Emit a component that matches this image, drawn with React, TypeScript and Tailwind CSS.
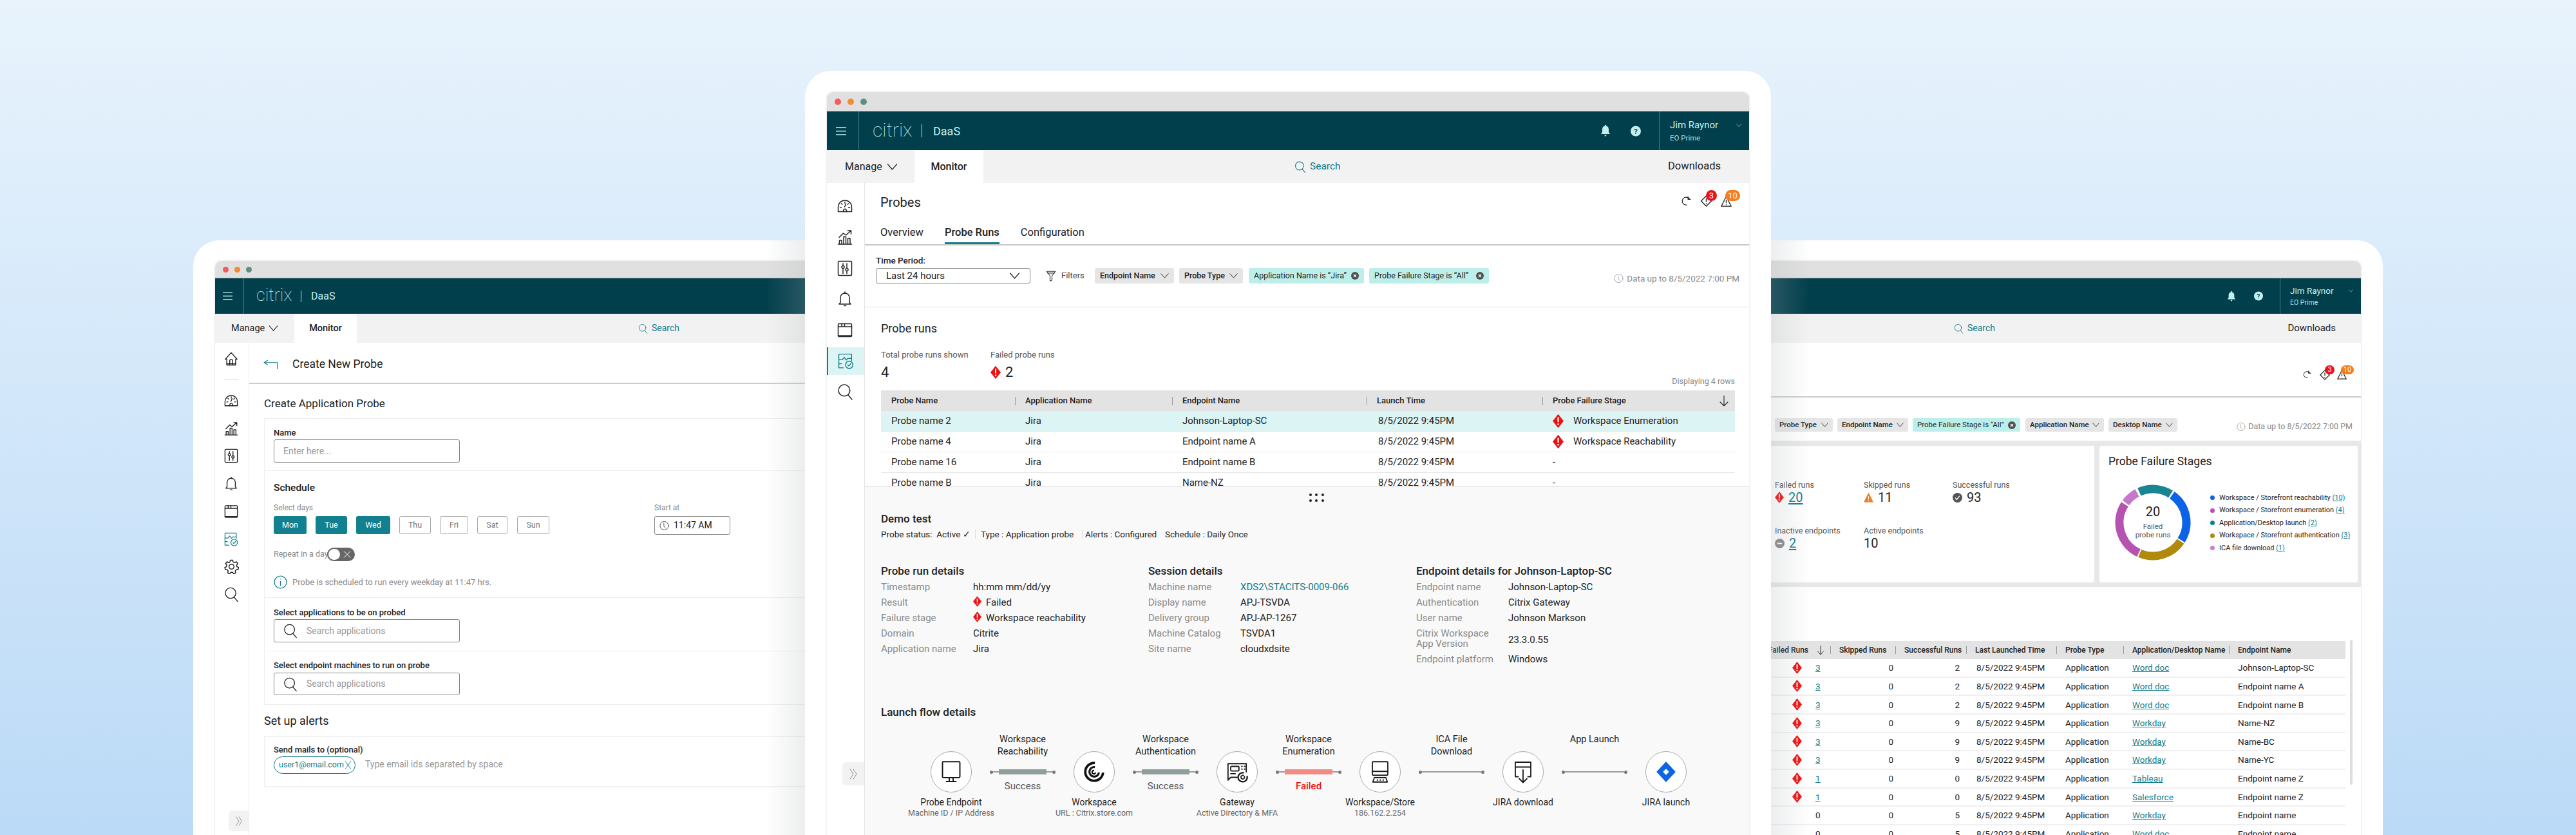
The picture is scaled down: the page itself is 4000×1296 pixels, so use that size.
import React from "react";

type P = { className?: string };
const Svg = ({ className, children, vb = "0 0 24 24", sw = 1.5 }: P & { children: React.ReactNode; vb?: string; sw?: number }) => (
  <svg viewBox={vb} fill="none" stroke="currentColor" strokeWidth={sw} strokeLinecap="round" strokeLinejoin="round" className={className}>
    {children}
  </svg>
);

const Gauge = ({ className }: P) => (
  <Svg className={className}>
    <path d="M1.500 20.500v-7a10.500 10.500 0 0 1 21 0v7z" />
    <path d="M9 20.500l1.500-4h3l1.500 4" />
    <path d="M12 5.500v2M6.500 8l1.200 1.200M17.500 8l-1.200 1.200M4.500 14h2M17.500 14h2M11.500 13l2-4.500" />
  </Svg>
);
const Graph = ({ className }: P) => (
  <Svg className={className}>
    <path d="M1.500 23h21M3.500 23v-6h3.500v6M10 23V11.500h3.500V23M16.500 23v-9H20v9" />
    <path d="M3 12.500 9.500 6l4 3L21.500 2M16.500 2h5v5" />
  </Svg>
);
const Sliders = ({ className }: P) => (
  <Svg className={className}>
    <rect x="1.500" y="1" width="21" height="22" rx="1.500" />
    <path d="M9 4.500v3.500M9 12v8M15 4.500v7M15 16v4" />
    <circle cx="9" cy="10" r="2" />
    <circle cx="15" cy="14" r="2" />
  </Svg>
);
const Bell = ({ className }: P) => (
  <Svg className={className}>
    <path d="M12 1v2.500M5 17.500V10a7 7 0 0 1 14 0v7.500l2 2.500H3z" />
    <path d="M10.500 22.500h3" />
  </Svg>
);
const Win = ({ className }: P) => (
  <Svg className={className}>
    <rect x="1.500" y="2" width="21" height="20" rx="1.500" />
    <path d="M1.500 6.500h21M7 2v4.500M11.500 2v4.500" />
    <path d="M1.500 20.500h21" />
  </Svg>
);
const ProbeIc = ({ className }: P) => (
  <Svg className={className} sw={1.300}>
    <path d="M8 22H1.500V1.500h19V11" />
    <path d="M1.500 10h5l3-3.500 3 4 2-2.500h6" />
    <path d="M1.500 16h4" />
    <circle cx="17" cy="17.500" r="5.500" />
    <path d="m14.800 17.500 1.700 1.800 2.800-3.500" />
  </Svg>
);
const Search = ({ className }: P) => (
  <Svg className={className} vb="0 0 24 24" sw={1.400}>
    <circle cx="10.500" cy="10" r="8.500" />
    <path d="m16 16.500 6 7" />
  </Svg>
);
const Home = ({ className }: P) => (
  <Svg className={className}>
    <path d="M12 1.500 2 12.500h2.500v10h15v-10H22z" />
    <path d="M9.500 22.500v-7a2.500 2.500 0 0 1 5 0v7" />
    <path d="M4.500 20.500h15" />
  </Svg>
);
const Gear = ({ className }: P) => (
  <Svg className={className}>
    <path d="M10 1.500h4l.6 3 2.500 1.100 2.600-1.600 2.500 3-2 2.300.5 2.700 2.800 1.100-.8 3.800-3 0-1.700 2.100.9 2.900-3.500 1.700-1.700-2.500h-2.800l-1.700 2.500-3.500-1.700.9-2.900-1.700-2.100-3 0-.8-3.800 2.800-1.100.5-2.700-2-2.300 2.500-3 2.600 1.600L9.400 4.500z" />
    <circle cx="12" cy="12" r="4" />
  </Svg>
);
const Chev = ({ className }: P) => (
  <Svg className={className} vb="0 0 16 10" sw={1.200}>
    <path d="m1 1 7 8 7-8" />
  </Svg>
);
const DblChev = ({ className }: P) => (
  <Svg className={className} vb="0 0 16 20" sw={1}>
    <path d="m2 1 6 9-6 9M8 1l6 9-6 9" />
  </Svg>
);
const Diamond = ({ className }: P) => (
  <svg viewBox="0 0 16 20" className={className}>
    <path d="M8 .5 15.500 10 8 19.500.5 10z" fill="#ee1111" stroke="#ee1111" strokeLinejoin="round" />
    <path d="M8 4.500v7" stroke="#fff" strokeWidth="2" />
    <circle cx="8" cy="14.500" r="1.200" fill="#fff" />
  </svg>
);
const XCirc = () => (
  <svg viewBox="0 0 12 12" className="w-[12px] h-[12px] shrink-0">
    <circle cx="6" cy="6" r="6" fill="#505050" />
    <path d="m4 4 4 4M8 4 4 8" stroke="#fff" strokeWidth="1.300" />
  </svg>
);
const Clock = ({ className }: P) => (
  <Svg className={className} sw={1.200}>
    <circle cx="12" cy="12" r="10.500" />
    <path d="M11 6v7l4 5" />
  </Svg>
);
const Funnel = ({ className }: P) => (
  <Svg className={className}>
    <path d="M3 3h18l-7 9v9l-4 2V12z" />
    <path d="M5 6.500h14" />
  </Svg>
);
const Refresh = ({ className }: P) => (
  <Svg className={className} sw={1.600}>
    <path d="M16 5.500A8 8 0 1 0 13 20" />
    <path d="M15.500 3v5.500h5" fill="currentColor" />
  </Svg>
);

function StatusIcons({ big }: { big: boolean }) {
  return (
    <div className={big ? "flex items-center mr-[27px] mt-[-4px]" : "flex items-center mr-[22px] mt-[-2px]"}>
      <Refresh className={big ? "w-[19px] h-[18px] text-[#222]" : "w-[17px] h-[15px] text-[#222]"} />
      <div className={big ? "relative ml-[12px]" : "relative ml-[11px]"}>
        <svg viewBox="0 0 18 18" fill="none" stroke="#222" strokeWidth="1.400" className={big ? "w-[19px] h-[18px]" : "w-[16px] h-[16px]"}>
          <path d="M9 1 17 9 9 17 1 9z" />
          <path d="M9 5v5.500M9 12.500V14" />
        </svg>
        <span className={big ? "absolute left-[9px] top-[-8px] w-[17px] h-[17px] rounded-full bg-[#e8131a] text-white text-[13px] leading-[17px] text-center" : "absolute left-[8px] top-[-7px] w-[15px] h-[14px] rounded-full bg-[#e8131a] text-white text-[11px] leading-[14px] text-center"}>3</span>
      </div>
      <div className={big ? "relative ml-[13px]" : "relative ml-[11px]"}>
        <svg viewBox="0 0 18 18" fill="none" stroke="#222" strokeWidth="1.400" className={big ? "w-[17px] h-[17px]" : "w-[15px] h-[15px]"}>
          <path d="M9 1 17 17H1z" />
          <path d="M9 6.500v5.500M9 14v1" />
        </svg>
        <span className={big ? "absolute left-[7px] top-[-9px] w-[23px] h-[17px] rounded-full bg-[#f57c1f] text-white text-[13px] leading-[17px] text-center" : "absolute left-[6px] top-[-7px] w-[20px] h-[14px] rounded-full bg-[#f57c1f] text-white text-[11px] leading-[14px] text-center"}>10</span>
      </div>
    </div>
  );
}

function Chrome({ big, children }: { big: boolean; children: React.ReactNode }) {
  return (
    <div className="flex flex-col h-full border-x-2 border-t-2 border-[#f2f2f2] rounded-t-[12px] overflow-hidden">
      <div className={big ? "h-[30px] bg-[#e0e0e0] border-b border-[#b5b5b5] flex items-center pl-[12px] gap-[10px] shrink-0" : "h-[27px] bg-[#e0e0e0] border-b border-[#b5b5b5] flex items-center pl-[12px] gap-[9px] shrink-0"}>
        <span className={big ? "w-[10px] h-[10px] rounded-full bg-[#f4595d]" : "w-[9px] h-[9px] rounded-full bg-[#f4595d]"} />
        <span className={big ? "w-[10px] h-[10px] rounded-full bg-[#f58a33]" : "w-[9px] h-[9px] rounded-full bg-[#f58a33]"} />
        <span className={big ? "w-[10px] h-[10px] rounded-full bg-[#5b8f86]" : "w-[9px] h-[9px] rounded-full bg-[#5b8f86]"} />
      </div>
      <div className={big ? "h-[60px] bg-[#023f4c] flex items-stretch text-[#c2f0ee] shrink-0" : "h-[55px] bg-[#023f4c] flex items-stretch text-[#c2f0ee] shrink-0"}>
        <div className={big ? "w-[50px] border-r border-[#4a7a85] flex items-center justify-center pr-[6px]" : "w-[45px] border-r border-[#4a7a85] flex items-center justify-center pr-[6px]"}>
          <svg viewBox="0 0 16 14" className={big ? "w-[16px] h-[15px]" : "w-[15px] h-[13px]"} stroke="currentColor" strokeWidth="1.500"><path d="M0 1.500h16M0 7h16M0 12.500h16" /></svg>
        </div>
        <div className={big ? "flex items-center pl-[21px]" : "flex items-center pl-[19px]"}>
          <span className={big ? "text-[30px] font-thin leading-none w-[60px] whitespace-nowrap pb-[3px]" : "text-[27px] font-thin leading-none w-[55px] whitespace-nowrap pb-[3px]"}>citrix</span>
          <span className={big ? "w-px h-[20px] bg-[#c2f0ee] ml-[16px]" : "w-px h-[18px] bg-[#c2f0ee] ml-[14px]"} />
          <span className={big ? "ml-[17px] text-[18px]" : "ml-[15px] text-[16px]"}>DaaS</span>
        </div>
        <div className={big ? "ml-auto flex items-center gap-[31px] pr-[28px]" : "ml-auto flex items-center gap-[28px] pr-[26px]"}>
          <svg viewBox="0 0 16 18" fill="currentColor" className={big ? "w-[16px] h-[18px]" : "w-[14px] h-[16px]"}><path d="M8 0a1.200 1.200 0 0 1 1.200 1.500C12 2.200 13 4.500 13 7v4l2 3H1l2-3V7c0-2.500 1-4.800 3.800-5.500A1.200 1.200 0 0 1 8 0zM6 15.500h4L8 18z" /></svg>
          <svg viewBox="0 0 16 16" className={big ? "w-[16px] h-[17px]" : "w-[14px] h-[15px]"}><circle cx="8" cy="8" r="8" fill="currentColor" /><text x="8" y="12" textAnchor="middle" fontSize="11" fontWeight="700" fill="#023f4c">?</text></svg>
        </div>
        <div className={big ? "w-[140px] border-l border-[#4a7a85] pl-[16px] pt-[12px] relative" : "w-[126px] border-l border-[#4a7a85] pl-[15px] pt-[11px] relative"}>
          <div className={big ? "text-[15px] leading-[18px]" : "text-[13.500px] leading-[16px]"}>Jim Raynor</div>
          <div className={big ? "text-[11.500px] leading-[14px] mt-[4px] opacity-90" : "text-[10.500px] leading-[13px] mt-[4px] opacity-90"}>EO Prime</div>
          <Chev className={big ? "absolute right-[12px] top-[19px] w-[8px] h-[5px]" : "absolute right-[12px] top-[17px] w-[7px] h-[5px]"} />
        </div>
      </div>
      <div className={big ? "h-[51px] bg-[#f2f2f2] flex items-stretch text-[#222] shrink-0" : "h-[45px] bg-[#f2f2f2] flex items-stretch text-[#222] shrink-0"}>
        <div className={big ? "w-[136px] pl-[28px] flex items-center gap-[7px] text-[16px] whitespace-nowrap" : "w-[123px] pl-[25px] flex items-center gap-[6px] text-[14.500px] whitespace-nowrap"}>
          Manage <Chev className={big ? "w-[17px] h-[10px]" : "w-[15px] h-[9px]"} />
        </div>
        <div className={big ? "w-[107px] bg-white flex items-center justify-center text-[16px] font-medium" : "w-[97px] bg-white flex items-center justify-center text-[14.500px] font-medium"}>Monitor</div>
        <div className={big ? "ml-[483px] flex items-center gap-[6px] text-[15.500px] text-[#0f7c8c]" : "ml-[437px] flex items-center gap-[6px] text-[14px] text-[#0f7c8c]"}>
          <Search className={big ? "w-[18px] h-[18px]" : "w-[15px] h-[16px]"} /> Search
        </div>
        <div className={big ? "ml-auto mr-[44px] flex items-center text-[16.500px]" : "ml-auto mr-[39px] flex items-center text-[15px]"}>Downloads</div>
      </div>
      {children}
    </div>
  );
}

function Side({ big, children }: { big: boolean; children: React.ReactNode }) {
  return (
    <div className={big ? "relative w-[59px] shrink-0 border-r border-[#e5e5e5] bg-white flex flex-col items-stretch pt-[12px] text-[#222]" : "relative w-[53px] shrink-0 border-r border-[#eee] bg-white flex flex-col items-stretch pt-[3px] text-[#222]"}>
      {children}
    </div>
  );
}

const BigSlot = ({ children, active }: { children: React.ReactNode; active?: boolean }) => (
  <div className={active ? "h-[43px] mt-[3px] mb-[2px] flex items-center justify-center bg-[#dcf4f4] border-l-2 border-[#0f7c8c] text-[#0f7c8c] pr-[2px]" : "h-[48px] flex items-center justify-center pr-[2px]"}>{children}</div>
);
const SmSlot = ({ children, teal }: { children: React.ReactNode; teal?: boolean }) => (
  <div className={teal ? "h-[43px] flex items-center justify-center text-[#0f7c8c] pr-[2px]" : "h-[43px] flex items-center justify-center pr-[2px]"}>{children}</div>
);

function HCell({ children, first, right }: { children: React.ReactNode; first?: boolean; right?: React.ReactNode }) {
  return (
    <div className="flex items-center pl-[16px] relative font-medium">
      {!first && <span className="absolute left-0 h-[13px] w-px bg-[#9a9a9a]" />}
      {children}
      {right}
    </div>
  );
}

const bigRows = [
  ["Probe name 2", "Jira", "Johnson-Laptop-SC", "8/5/2022 9:45PM", "Workspace Enumeration"],
  ["Probe name 4", "Jira", "Endpoint name A", "8/5/2022 9:45PM", "Workspace Reachability"],
  ["Probe name 16", "Jira", "Endpoint name B", "8/5/2022 9:45PM", "-"],
  ["Probe name B", "Jira", "Name-NZ", "8/5/2022 9:45PM", "-"],
];

function KV({ k, v, vClass, icon, tall, k2 }: { k: string; v: string; vClass?: string; icon?: boolean; tall?: boolean; k2?: string }) {
  return (
    <div className={tall ? "flex h-[40px] leading-[16px] pt-[4px]" : "flex h-[24px] items-center"}>
      <div className="w-[143px] text-[#8a8a8a] shrink-0">
        {k}
        {k2 && <div>{k2}</div>}
      </div>
      <div className={"flex items-center " + (vClass ?? "text-[#222]")}>
        {icon && <Diamond className="w-[13px] h-[17px] mr-[7px] -mt-[3px]" />}
        {v}
      </div>
    </div>
  );
}

function Connector({ t1, t2, res, state }: { t1: string; t2?: string; res?: string; state?: "ok" | "fail" }) {
  return (
    <div className="w-[102px] shrink-0 flex flex-col items-center">
      <div className="h-[41px] pt-[3px] text-center text-[14.500px] leading-[19px] text-[#222] whitespace-nowrap">
        <div>{t1}</div>
        {t2 && <div>{t2}</div>}
      </div>
      <div className="relative w-full h-[16px] mt-[14px] flex items-center">
        <span className="w-[5px] h-[5px] rounded-full bg-[#777] shrink-0" />
        <span className="flex-1 h-[2px] bg-[#9a9a9a]" />
        <span className="w-[5px] h-[5px] rounded-full bg-[#777] shrink-0" />
        {state && <span className={state === "ok" ? "absolute left-[14px] top-[4px] w-[74px] h-[8px] bg-[#8f9d9c]" : "absolute left-[14px] top-[4px] w-[74px] h-[8px] bg-[#f08c84]"} />}
      </div>
      {res && <div className={state === "fail" ? "mt-[5px] h-[18px] leading-[18px] text-[15px] font-medium text-[#ee1111]" : "mt-[5px] h-[18px] leading-[18px] text-[15px] text-[#555]"}>{res}</div>}
    </div>
  );
}

function Node({ title, sub, children }: { title: string; sub?: string; children: React.ReactNode }) {
  return (
    <div className="w-[120px] shrink-0 flex flex-col items-center pt-[31px] whitespace-nowrap">
      <div className="w-[64px] h-[64px] rounded-full border border-[#aaa] bg-white flex items-center justify-center text-[#1a1a1a]">{children}</div>
      <div className="mt-[6px] h-[18px] leading-[18px] text-[14px] text-[#222]">{title}</div>
      {sub && <div className="h-[16px] leading-[16px] text-[12.500px] text-[#666]">{sub}</div>}
    </div>
  );
}

const chipBig = "h-[24px] rounded-[3px] px-[8px] flex items-center justify-between text-[12.500px] whitespace-nowrap shrink-0";

function CenterWindow() {
  return (
    <Chrome big>
      <div className="flex flex-1 min-h-0 text-[#222]">
        <Side big>
          <BigSlot><Gauge className="w-[24px] h-[24px]" /></BigSlot>
          <BigSlot><Graph className="w-[24px] h-[24px]" /></BigSlot>
          <BigSlot><Sliders className="w-[24px] h-[25px]" /></BigSlot>
          <BigSlot><Bell className="w-[24px] h-[26px]" /></BigSlot>
          <BigSlot><Win className="w-[24px] h-[25px]" /></BigSlot>
          <BigSlot active><ProbeIc className="w-[25px] h-[25px]" /></BigSlot>
          <BigSlot><Search className="w-[25px] h-[26px]" /></BigSlot>
          <div className="absolute right-0 top-[899px] w-[34px] h-[36px] bg-[#f2f2f2] rounded-l-[6px] flex items-center justify-center text-[#777]">
            <DblChev className="w-[16px] h-[17px]" />
          </div>
        </Side>
        <div className="flex-1 min-w-0 flex flex-col">
          <div className="border-b-2 border-[#c8c8c8] shrink-0">
            <div className="h-[60px] pl-[24px] flex items-center justify-between">
              <span className="text-[20px]">Probes</span>
              <StatusIcons big />
            </div>
            <div className="h-[35px] pl-[24px] flex gap-[33px] text-[16.500px] whitespace-nowrap">
              <span className="flex items-center h-[35px]">Overview</span>
              <span className="flex items-center h-[35px] font-medium border-b-[3px] border-[#0f7c8c] pt-[3px]">Probe Runs</span>
              <span className="flex items-center h-[35px]">Configuration</span>
            </div>
          </div>
          <div className="h-[96px] shrink-0 border-b border-[#ddd] pl-[17px] pt-[15px] pr-[15px]">
            <div className="h-[16px] leading-[16px] text-[13.500px] font-medium">Time Period:</div>
            <div className="mt-[4px] h-[24px] flex items-center">
              <div className="w-[240px] h-[24px] border border-[#888] rounded-[3px] flex items-center justify-between pl-[15px] pr-[15px] text-[15px]">
                Last 24 hours <Chev className="w-[17px] h-[10px]" />
              </div>
              <Funnel className="w-[18px] h-[20px] ml-[23px] text-[#333]" />
              <span className="ml-[7px] text-[13px] text-[#444] w-[52px]">Filters</span>
              <div className={chipBig + " w-[123px] bg-[#e5e5e5] font-medium"}>Endpoint Name <Chev className="w-[13px] h-[8px]" /></div>
              <div className={chipBig + " w-[99px] ml-[8px] bg-[#e5e5e5] font-medium"}>Probe Type <Chev className="w-[13px] h-[8px]" /></div>
              <div className={chipBig + " w-[179px] ml-[9px] bg-[#bdefea]"}>Application Name is “Jira” <XCirc /></div>
              <div className={chipBig + " w-[186px] ml-[8px] bg-[#bdefea]"}>Probe Failure Stage is “All” <XCirc /></div>
              <div className="ml-auto flex items-center mt-[8px] text-[13.500px] text-[#888] gap-[5px] whitespace-nowrap">
                <Clock className="w-[15px] h-[16px]" /> Data up to 8/5/2022 7:00 PM
              </div>
            </div>
          </div>
          <div className="h-[278px] shrink-0 overflow-hidden pl-[25px] pr-[22px] pt-[23px]">
            <div className="h-[20px] leading-[20px] text-[18px]">Probe runs</div>
            <div className="mt-[23px] h-[56px] flex justify-between items-end">
              <div className="flex self-start">
                <div className="w-[170px]">
                  <div className="h-[16px] leading-[16px] text-[13px] text-[#555]">Total probe runs shown</div>
                  <div className="mt-[6px] h-[26px] leading-[26px] text-[22px]">4</div>
                </div>
                <div>
                  <div className="h-[16px] leading-[16px] text-[13px] text-[#555]">Failed probe runs</div>
                  <div className="mt-[6px] h-[26px] leading-[26px] text-[22px] flex items-center gap-[7px]"><Diamond className="w-[16px] h-[20px]" /> 2</div>
                </div>
              </div>
              <div className="text-[12.500px] leading-[14px] text-[#888]">Displaying 4 rows</div>
            </div>
            <div className="mt-[7px]">
              <div className="h-[32px] bg-[#e3e3e3] grid grid-cols-[208px_244px_302px_273px_1fr] text-[13px]">
                <HCell first>Probe Name</HCell>
                <HCell>Application Name</HCell>
                <HCell>Endpoint Name</HCell>
                <HCell>Launch Time</HCell>
                <HCell right={<svg viewBox="0 0 18 20" className="absolute right-[9px] w-[16px] h-[18px]" fill="none" stroke="#222" strokeWidth="1.300"><path d="M9 1v18M2 12l7 7 7-7" /></svg>}>Probe Failure Stage</HCell>
              </div>
              {bigRows.map((r, i) => (
                <div key={i} className={i === 0 ? "h-[32px] bg-[#dcf4f4] border-b border-[#e5e5e5] grid grid-cols-[208px_244px_302px_273px_1fr] items-center text-[15px]" : "h-[32px] border-b border-[#e5e5e5] grid grid-cols-[208px_244px_302px_273px_1fr] items-center text-[15px]"}>
                  <div className="pl-[16px]">{r[0]}</div>
                  <div className="pl-[16px]">{r[1]}</div>
                  <div className="pl-[16px]">{r[2]}</div>
                  <div className="pl-[18px]">{r[3]}</div>
                  <div className="pl-[16px] flex items-center">
                    {r[4] !== "-" && <Diamond className="w-[17px] h-[21px] mr-[15px]" />}
                    {r[4]}
                  </div>
                </div>
              ))}
            </div>
          </div>
          <div className="flex-1 border-t border-[#ddd] bg-[#f9f9f9] pl-[25px]">
            <div className="h-[27px] flex justify-center items-start pt-[10px] pl-[4px]">
              <div className="grid grid-cols-3 gap-x-[5.500px] gap-y-[5px]">
                {[0, 1, 2, 3, 4, 5].map((d) => <span key={d} className="w-[4px] h-[4px] rounded-full bg-[#222]" />)}
              </div>
            </div>
            <div className="mt-[12px] h-[20px] leading-[20px] text-[17px] font-medium">Demo test</div>
            <div className="mt-[6px] h-[16px] flex items-center text-[13.500px] leading-[16px] whitespace-nowrap">
              <span className="w-[146px] flex">Probe status:&nbsp; Active ✓</span>
              <span className="w-px h-[14px] bg-[#ddd]" />
              <span className="ml-[8px] w-[157px]">Type : Application probe</span>
              <span className="w-px h-[14px] bg-[#ddd]" />
              <span className="ml-[4px] w-[124px]">Alerts : Configured</span>
              <span>Schedule : Daily Once</span>
            </div>
            <div className="mt-[39px] flex text-[15px]">
              <div className="w-[415px]">
                <div className="h-[20px] leading-[20px] text-[17px] font-medium mb-[3px]">Probe run details</div>
                <KV k="Timestamp" v="hh:mm mm/dd/yy" />
                <KV k="Result" v="Failed" icon />
                <KV k="Failure stage" v="Workspace reachability" icon />
                <KV k="Domain" v="Citrite" />
                <KV k="Application name" v="Jira" />
              </div>
              <div className="w-[416px]">
                <div className="h-[20px] leading-[20px] text-[17px] font-medium mb-[3px]">Session details</div>
                <KV k="Machine name" v="XDS2\STACITS-0009-066" vClass="text-[#0f7c8c]" />
                <KV k="Display name" v="APJ-TSVDA" />
                <KV k="Delivery group" v="APJ-AP-1267" />
                <KV k="Machine Catalog" v="TSVDA1" />
                <KV k="Site name" v="cloudxdsite" />
              </div>
              <div>
                <div className="h-[20px] leading-[20px] text-[17px] font-medium mb-[3px] whitespace-nowrap">Endpoint details for Johnson-Laptop-SC</div>
                <KV k="Endpoint name" v="Johnson-Laptop-SC" />
                <KV k="Authentication" v="Citrix Gateway" />
                <KV k="User name" v="Johnson Markson" />
                <KV k="Citrix Workspace" k2="App Version" v="23.3.0.55" tall />
                <KV k="Endpoint platform" v="Windows" />
              </div>
            </div>
            <div className="mt-[60px] h-[20px] leading-[20px] text-[17px] font-medium">Launch flow details</div>
            <div className="mt-[20px] ml-[49px] flex items-start">
              <Node title="Probe Endpoint" sub="Machine ID / IP Address">
                <Svg className="w-[38px] h-[36px]" sw={1.300}>
                  <rect x="3" y="1.500" width="18" height="16.500" rx="1" />
                  <path d="M10 18v4M14 18v4M7 22h10" />
                </Svg>
              </Node>
              <Connector t1="Workspace" t2="Reachability" res="Success" state="ok" />
              <Node title="Workspace" sub="URL : Citrix.store.com">
                <svg viewBox="0 0 32 32" className="w-[34px] h-[34px]" fill="none" stroke="#111" strokeLinecap="butt">
                  <path d="M17 3A13 13 0 1 0 29 17" strokeWidth="3.500" />
                  <path d="M17 9a7 7 0 1 0 6 8" strokeWidth="3" />
                  <path d="M16 14a2.500 2.500 0 1 0 2 3" strokeWidth="2" />
                </svg>
              </Node>
              <Connector t1="Workspace" t2="Authentication" res="Success" state="ok" />
              <Node title="Gateway" sub="Active Directory & MFA">
                <Svg className="w-[34px] h-[34px]" sw={1.300}>
                  <path d="M12 18H5l-3 3V3h20v9" />
                  <rect x="5" y="6" width="9" height="5" rx="1" />
                  <path d="M17 6h.5M20 6h.5M17 9h.5M20 9h.5M5 14h5" />
                  <path d="M19 13a5 5 0 1 0 4 4" strokeWidth="1.600" />
                  <path d="M19 16a2 2 0 1 0 1 1" />
                </Svg>
              </Node>
              <Connector t1="Workspace" t2="Enumeration" res="Failed" state="fail" />
              <Node title="Workspace/Store" sub="186.162.2.254">
                <Svg className="w-[36px] h-[36px]" sw={1.200}>
                  <rect x="4" y="1.500" width="16" height="14" rx="1" />
                  <path d="M4 11.500h16" />
                  <path d="M6 18h12l1.500 4.500h-15z" />
                  <path d="M9 20.500h.5M12 20.500h.5M15 20.500h.5" />
                </Svg>
              </Node>
              <Connector t1="ICA File" t2="Download" />
              <Node title="JIRA download">
                <Svg className="w-[36px] h-[36px]" sw={1.200}>
                  <path d="M7 17H4V2h16v15h-3M4 7h16" />
                  <path d="M12 10v13M8 19l4 4 4-4" />
                </Svg>
              </Node>
              <Connector t1="App Launch" />
              <Node title="JIRA launch">
                <svg viewBox="0 0 32 32" className="w-[34px] h-[34px]">
                  <path d="M16 1 30 16 16 31 2 16z" fill="#0c66e4" />
                  <path d="M16 11.500 20.500 16 16 20.500 11.500 16z" fill="#fff" />
                </svg>
              </Node>
            </div>
          </div>
        </div>
      </div>
    </Chrome>
  );
}

const Inp = ({ children, extra }: { children: React.ReactNode; extra: string }) => (
  <div className={"w-[289px] border border-[#888] rounded-[3px] flex items-center text-[#999] text-[14px] " + extra}>{children}</div>
);

function LeftWindow() {
  const on = "h-[28px] rounded-[3px] bg-[#12808f] text-white flex items-center justify-center text-[12.500px]";
  const off = "h-[28px] rounded-[3px] border border-[#aaa] text-[#777] flex items-center justify-center text-[12.500px]";
  return (
    <Chrome big={false}>
      <div className="flex flex-1 min-h-0 text-[#222]">
        <Side big={false}>
          <SmSlot><Home className="w-[22px] h-[22px]" /></SmSlot>
          <div className="h-[22px] flex items-center justify-center pr-[2px]"><span className="w-[22px] h-px bg-[#ddd]" /></div>
          <SmSlot><Gauge className="w-[22px] h-[22px]" /></SmSlot>
          <SmSlot><Graph className="w-[22px] h-[22px]" /></SmSlot>
          <SmSlot><Sliders className="w-[22px] h-[23px]" /></SmSlot>
          <SmSlot><Bell className="w-[22px] h-[23px]" /></SmSlot>
          <SmSlot><Win className="w-[22px] h-[22px]" /></SmSlot>
          <SmSlot teal><ProbeIc className="w-[22px] h-[24px]" /></SmSlot>
          <SmSlot><Gear className="w-[23px] h-[23px]" /></SmSlot>
          <SmSlot><Search className="w-[23px] h-[23px]" /></SmSlot>
          <div className="absolute right-0 top-[726px] w-[31px] h-[32px] bg-[#f2f2f2] rounded-l-[6px] flex items-center justify-center text-[#777]">
            <DblChev className="w-[14px] h-[15px]" />
          </div>
        </Side>
        <div className="flex-1 min-w-0">
          <div className="h-[64px] border-b-2 border-[#ccc] flex items-center pl-[22px] pt-[4px]">
            <svg viewBox="0 0 24 16" className="w-[23px] h-[15px]" fill="none" stroke="#0f7c8c" strokeWidth="1.200"><path d="M7 1 1 5l6 4M1 5h22v11" /></svg>
            <span className="ml-[22px] text-[17.500px]">Create New Probe</span>
          </div>
          <div className="pl-[23px]">
            <div className="mt-[19px] h-[22px] leading-[22px] text-[17px]">Create Application Probe</div>
            <div className="mt-[12px] border-y border-l border-[#eee]">
              <div className="h-[81px] pl-[14px] pt-[14px] border-b border-[#eee]">
                <div className="h-[16px] leading-[16px] text-[13px] font-medium">Name</div>
                <Inp extra="h-[36px] mt-[2px] pl-[14px]">Enter here...</Inp>
              </div>
              <div className="h-[197px] pl-[14px] pt-[16px] border-b border-[#eee]">
                <div className="h-[20px] leading-[20px] text-[15.500px] font-medium">Schedule</div>
                <div className="mt-[14px] flex">
                  <div className="w-[591px]">
                    <div className="h-[14px] leading-[14px] text-[12px] text-[#888]">Select days</div>
                    <div className="mt-[6px] flex">
                      <div className={on + " w-[51px]"}>Mon</div>
                      <div className={on + " w-[49px] ml-[14px]"}>Tue</div>
                      <div className={on + " w-[53px] ml-[14px]"}>Wed</div>
                      <div className={off + " w-[49px] ml-[14px]"}>Thu</div>
                      <div className={off + " w-[44px] ml-[14px]"}>Fri</div>
                      <div className={off + " w-[47px] ml-[14px]"}>Sat</div>
                      <div className={off + " w-[50px] ml-[15px]"}>Sun</div>
                    </div>
                  </div>
                  <div>
                    <div className="h-[14px] leading-[14px] text-[12px] text-[#888]">Start at</div>
                    <div className="mt-[6px] w-[118px] h-[29px] border border-[#888] rounded-[3px] flex items-center pl-[7px] gap-[7px] text-[14px]">
                      <Clock className="w-[15px] h-[16px] text-[#222]" /> 11:47 AM
                    </div>
                  </div>
                </div>
                <div className="mt-[20px] h-[21px] flex items-center text-[12.500px] text-[#888]">
                  <span className="w-[83px] whitespace-nowrap">Repeat in a day</span>
                  <span className="relative w-[43px] h-[21px] rounded-full bg-[#666]">
                    <span className="absolute left-[2px] top-[2px] w-[18px] h-[17px] rounded-full bg-white" />
                    <svg viewBox="0 0 12 12" className="absolute right-[6px] top-[4px] w-[12px] h-[13px]" stroke="#fff" strokeWidth="1"><path d="m1 1 10 10M11 1 1 11" /></svg>
                  </span>
                </div>
                <div className="mt-[22px] h-[21px] flex items-center gap-[8px] text-[13px] text-[#888]">
                  <svg viewBox="0 0 21 21" className="w-[21px] h-[21px]" fill="none" stroke="#0f7c8c" strokeWidth="1.200"><circle cx="10.500" cy="10.500" r="9.500" /><path d="M10.500 9v7M10.500 5.500v1" /></svg>
                  Probe is scheduled to run every weekday at 11:47 hrs.
                </div>
              </div>
              <div className="h-[83px] pl-[14px] pt-[15px] border-b border-[#eee]">
                <div className="h-[16px] leading-[16px] text-[13px] font-medium">Select applications to be on probed</div>
                <Inp extra="h-[36px] mt-[2px] pl-[14px] gap-[14px]"><Search className="w-[22px] h-[24px] text-[#222]" /> Search applications</Inp>
              </div>
              <div className="h-[82px] pl-[14px] pt-[14px]">
                <div className="h-[16px] leading-[16px] text-[13px] font-medium">Select endpoint machines to run on probe</div>
                <Inp extra="h-[35px] mt-[3px] pl-[14px] gap-[14px]"><Search className="w-[22px] h-[24px] text-[#222]" /> Search applications</Inp>
              </div>
            </div>
            <div className="mt-[13px] h-[24px] leading-[24px] text-[18px]">Set up alerts</div>
            <div className="mt-[11px] h-[80px] border-y-2 border-l-2 border-[#f2f2f2] pl-[13px] pt-[12px]">
              <div className="h-[16px] leading-[16px] text-[13px] font-medium">Send mails to (optional)</div>
              <div className="mt-[2px] flex">
                <div className="w-[127px] h-[27px] border border-[#0f7c8c] rounded-full bg-white flex items-center justify-between pl-[7px] pr-[5px] text-[12.500px] text-[#0f7c8c]">
                  user1@email.com
                  <svg viewBox="0 0 12 16" className="w-[11px] h-[15px]" stroke="#0f7c8c" strokeWidth="1" fill="none"><path d="m1 1 10 14M11 1 1 15" /></svg>
                </div>
                <span className="ml-[15px] text-[14px] text-[#999] leading-[24px]">Type email ids separated by space</span>
              </div>
            </div>
          </div>
        </div>
      </div>
    </Chrome>
  );
}

function arc(a0: number, a1: number, r: number) {
  const p = (a: number) => {
    const t = ((a - 90) * Math.PI) / 180;
    return `${(60 + r * Math.cos(t)).toFixed(2)} ${(60 + r * Math.sin(t)).toFixed(2)}`;
  };
  return `M${p(a0)} A${r} ${r} 0 ${a1 - a0 > 180 ? 1 : 0} 1 ${p(a1)}`;
}

const legend = [
  { c: "bg-[#0d63e8]", t: "Workspace / Storefront reachability", n: "(10)" },
  { c: "bg-[#b652b0]", t: "Workspace / Storefront enumeration", n: "(4)" },
  { c: "bg-[#0f7f8f]", t: "Application/Desktop launch", n: "(2)" },
  { c: "bg-[#b08a0c]", t: "Workspace / Storefront authentication", n: "(3)" },
  { c: "bg-[#cc7ed0]", t: "ICA file download", n: "(1)" },
];

const sideRows = [
  ["3", "0", "2", "Word doc", "Johnson-Laptop-SC"],
  ["3", "0", "2", "Word doc", "Endpoint name A"],
  ["3", "0", "2", "Word doc", "Endpoint name B"],
  ["3", "0", "9", "Workday", "Name-NZ"],
  ["3", "0", "9", "Workday", "Name-BC"],
  ["3", "0", "9", "Workday", "Name-YC"],
  ["1", "0", "0", "Tableau", "Endpoint name Z"],
  ["1", "0", "0", "Salesforce", "Endpoint name Z"],
  ["0", "0", "5", "Workday", "Endpoint name"],
  ["0", "0", "5", "Word doc", "Endpoint name"],
];

const chip = "h-[21px] rounded-[3px] px-[7px] flex items-center justify-between text-[11.500px] shrink-0 whitespace-nowrap";

function SH({ children, first }: { children: React.ReactNode; first?: boolean }) {
  return (
    <div className="relative flex items-center pl-[14px] whitespace-nowrap">
      {!first && <span className="absolute left-0 h-[12px] w-px bg-[#9a9a9a]" />}
      {children}
    </div>
  );
}

function Met({ label, value, icon, link }: { label: string; value: string; icon?: React.ReactNode; link?: boolean }) {
  return (
    <div>
      <div className="h-[14px] leading-[14px] text-[#555] whitespace-nowrap">{label}</div>
      <div className="h-[24px] flex items-center gap-[7px] text-[20px] mt-0">
        {icon}
        {link ? <span className="text-[#0f7c8c] underline underline-offset-2">{value}</span> : <span>{value}</span>}
      </div>
    </div>
  );
}

function RightWindow() {
  return (
    <Chrome big={false}>
      <div className="flex flex-1 min-h-0 text-[#222]">
        <Side big={false}>
          <SmSlot><Home className="w-[22px] h-[22px]" /></SmSlot>
        </Side>
        <div className="flex-1 min-w-0 relative">
          <div className="h-[85px] border-b-2 border-[#ccc] flex justify-end pt-[18px]">
            <StatusIcons big={false} />
          </div>
          <div className="h-[67px] pt-[32px] pl-[326px] pr-[13px] flex items-start">
            <div className={chip + " w-[90px] bg-[#e5e5e5] font-medium"}>Probe Type <Chev className="w-[11px] h-[7px]" /></div>
            <div className={chip + " w-[110px] ml-[7px] bg-[#e5e5e5] font-medium"}>Endpoint Name <Chev className="w-[11px] h-[7px]" /></div>
            <div className={chip + " w-[167px] ml-[7px] bg-[#bdefea]"}>Probe Failure Stage is “All” <XCirc /></div>
            <div className={chip + " w-[122px] ml-[8px] bg-[#e5e5e5] font-medium"}>Application Name <Chev className="w-[11px] h-[7px]" /></div>
            <div className={chip + " w-[107px] ml-[7px] bg-[#e5e5e5] font-medium"}>Desktop Name <Chev className="w-[11px] h-[7px]" /></div>
            <div className="ml-auto flex items-center gap-[4px] mt-[4px] text-[12.500px] text-[#888] whitespace-nowrap">
              <Clock className="w-[14px] h-[15px]" /> Data up to 8/5/2022 7:00 PM
            </div>
          </div>
          <div className="h-[227px] bg-[#e8e8e8] pt-[8px] pb-[7px] pl-[8px] pr-[5px] flex gap-[8px]">
            <div className="flex-1 bg-white rounded-[3px] pl-[318px] pt-[54px] grid grid-cols-[138px_138px_138px] auto-rows-[71px] text-[12.500px]">
              <Met label="Failed runs" value="20" icon={<Diamond className="w-[14px] h-[18px]" />} link />
              <Met label="Skipped runs" value="11" icon={<svg viewBox="0 0 16 16" className="w-[15px] h-[16px]"><path d="M8 0 16 16H0z" fill="#f57c1f" /><path d="M8 6v5M8 12.500v1.500" stroke="#fff" strokeWidth="1.300" /></svg>} />
              <Met label="Successful runs" value="93" icon={<svg viewBox="0 0 16 16" className="w-[15px] h-[15px]"><circle cx="8" cy="8" r="8" fill="#555" /><path d="m4.500 8 2.500 3 4.500-6" stroke="#fff" strokeWidth="1.500" fill="none" /></svg>} />
              <Met label="Inactive endpoints" value="2" icon={<svg viewBox="0 0 16 16" className="w-[15px] h-[15px]"><circle cx="8" cy="8" r="8" fill="#888" /><path d="M4 8h8" stroke="#fff" strokeWidth="2" /></svg>} link />
              <Met label="Active endpoints" value="10" />
            </div>
            <div className="w-[401px] bg-white rounded-[3px] pl-[14px] pt-[13px] shrink-0">
              <div className="h-[22px] leading-[22px] text-[17.500px]">Probe Failure Stages</div>
              <div className="mt-[24px] ml-[9px] flex">
                <div className="relative w-[120px] h-[120px] shrink-0">
                  <svg viewBox="0 0 120 120" className="w-[120px] h-[120px]" fill="none" strokeWidth="13">
                    <path d={arc(-24, 32, 52)} stroke="#1a8592" />
                    <path d={arc(35, 122, 52)} stroke="#0d63e8" />
                    <path d={arc(124, 203, 52)} stroke="#b08a0c" />
                    <path d={arc(205, 303, 52)} stroke="#b652b0" />
                    <path d={arc(306, 332, 52)} stroke="#c678c8" />
                  </svg>
                  <div className="absolute inset-0 flex flex-col items-center justify-center">
                    <span className="text-[20px] leading-[26px] mt-[-4px]">20</span>
                    <span className="text-[11.500px] leading-[13px] text-[#555] text-center mt-[4px]">Failed<br />probe runs</span>
                  </div>
                </div>
                <div className="ml-[29px] mt-[12px] text-[11px] whitespace-nowrap">
                  {legend.map((l, i) => (
                    <div key={i} className="h-[19.500px] flex items-center">
                      <span className={"w-[7px] h-[7px] rounded-full mr-[7px] " + l.c} />
                      <span>{l.t}&nbsp;</span>
                      <span className="text-[#0f7c8c] underline">{l.n}</span>
                    </div>
                  ))}
                </div>
              </div>
            </div>
          </div>
          <div className="mt-[84px] mr-[24px]">
            <div className="h-[28px] bg-[#e3e3e3] grid grid-cols-[300px_112px_101px_110px_140px_104px_164px_183px] text-[12px] font-medium">
              <div />
              <div className="relative flex items-center justify-end pr-[8px] gap-[12px] whitespace-nowrap">
                Failed Runs
                <svg viewBox="0 0 18 20" className="w-[14px] h-[18px]" fill="none" stroke="#222" strokeWidth="1.200"><path d="M9 1v18M3 12l6 7 6-7" /></svg>
              </div>
              <SH>Skipped Runs</SH>
              <SH>Successful Runs</SH>
              <SH>Last Launched Time</SH>
              <SH>Probe Type</SH>
              <SH>Application/Desktop Name</SH>
              <SH>Endpoint Name</SH>
            </div>
            {sideRows.map((r, i) => (
              <div key={i} className="h-[28.670px] border-b-2 border-[#f0f0f0] grid grid-cols-[300px_112px_101px_110px_140px_104px_164px_183px] items-center text-[13.500px]">
                <div />
                <div className="flex items-center justify-end pr-[15px]">
                  {r[0] !== "0" && <Diamond className="w-[15px] h-[19px] mr-[21px]" />}
                  {r[0] !== "0" ? <span className="text-[#0f7c8c] underline w-[8px]">{r[0]}</span> : <span className="w-[8px]">{r[0]}</span>}
                </div>
                <div className="text-right pr-[3px]">{r[1]}</div>
                <div className="text-right pr-[10px]">{r[2]}</div>
                <div className="pl-[16px] whitespace-nowrap">8/5/2022 9:45PM</div>
                <div className="pl-[14px]">Application</div>
                <div className="pl-[14px]"><span className="text-[#0f7c8c] underline">{r[3]}</span></div>
                <div className="pl-[14px]">{r[4]}</div>
              </div>
            ))}
          </div>
          <div className="absolute right-[13px] top-[461px] w-[4px] h-[225px] rounded-full bg-[#dedede]" />
        </div>
      </div>
    </Chrome>
  );
}

export default function App() {
  return (
    <div className="relative w-[4000px] h-[1296px] overflow-hidden bg-linear-to-b from-[#e8f3fc] to-[#bbdaf7] [font-family:Roboto,sans-serif]">
      <div className="absolute left-[300px] top-[373px] w-[1357px] h-[1000px] bg-white rounded-t-[40px] pt-[30px] px-[32px]">
        <LeftWindow />
        <div className="absolute left-[890px] top-0 bottom-0 w-[60px] bg-linear-to-r from-transparent to-[#aaafb438]" />
      </div>
      <div className="absolute left-[2343px] top-[373px] w-[1357px] h-[1000px] bg-white rounded-t-[40px] pt-[30px] px-[32px]">
        <RightWindow />
        <div className="absolute left-[407px] top-0 bottom-0 w-[60px] bg-linear-to-l from-transparent to-[#aaafb438]" />
      </div>
      <div className="absolute left-[1250px] top-[110px] w-[1500px] h-[1300px] bg-white rounded-t-[40px] pt-[31px] px-[32px]">
        <CenterWindow />
      </div>
    </div>
  );
}
